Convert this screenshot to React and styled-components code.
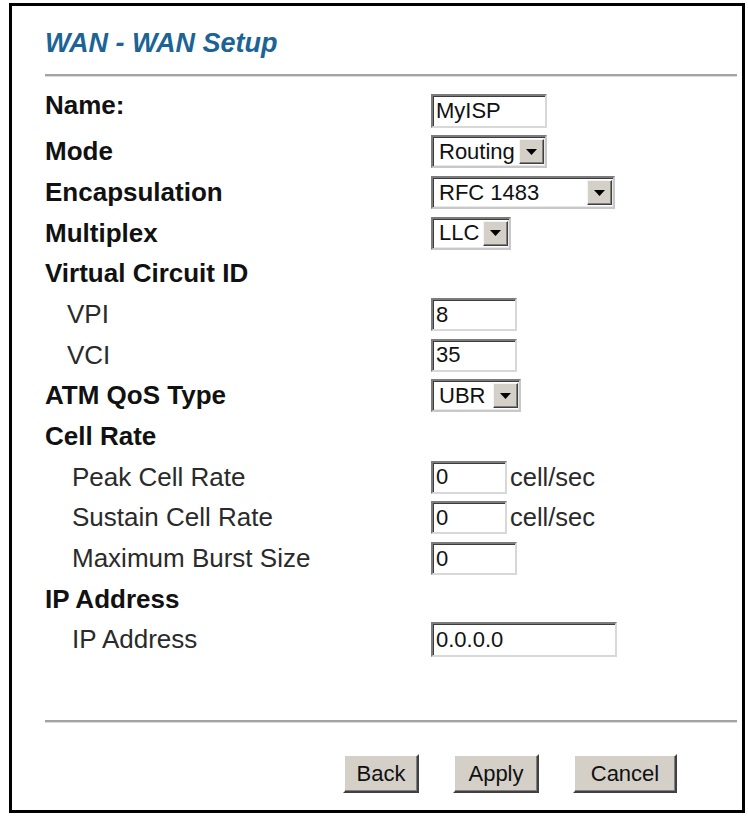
import { Fragment } from "react";
import styled, { createGlobalStyle } from "styled-components";

const GlobalStyle = createGlobalStyle`
  html, body {
    margin: 0;
    padding: 0;
    background: #ffffff;
  }
  body {
    font-family: "Liberation Sans", Arial, sans-serif;
    color: #111;
  }
`;

const Panel = styled.div`
  box-sizing: border-box;
  width: 736px;
  margin: 3px 0 0 9px;
  border: 3px solid #000;
  padding: 22px 5px 17px 33px;
  display: flex;
  flex-direction: column;
`;

const Title = styled.h1`
  margin: 0;
  font-size: 27px;
  line-height: 30px;
  font-weight: bold;
  font-style: italic;
  color: #1b6495;
`;

const Rule = styled.div`
  height: 2px;
  background: #a3a3a3;
  border-bottom: 1px solid #dcdcdc;
  margin-top: ${(p) => p.$top}px;
`;

const Form = styled.div`
  display: grid;
  grid-template-columns: 386px 1fr;
  grid-auto-rows: 40.67px;
  margin-top: 14px;
`;

const Label = styled.div`
  display: flex;
  align-items: center;
  padding-left: ${(p) => p.$indent || 0}px;
  padding-bottom: ${(p) => p.$lift || 0}px;
  font-size: 26px;
  font-weight: ${(p) => (p.$bold ? "bold" : "normal")};
  color: ${(p) => (p.$bold ? "#111" : "#2a2a2a")};
  white-space: nowrap;
`;

const Cell = styled.div`
  display: flex;
  align-items: center;
  gap: 3px;
`;

const TextBox = styled.input`
  box-sizing: border-box;
  width: ${(p) => p.$w}px;
  height: ${(p) => p.$h || 33}px;
  margin: 0;
  padding: 0 0 0 3px;
  border: 2px solid;
  border-color: #7c7c7c #d8d8d8 #d8d8d8 #7c7c7c;
  box-shadow: inset 1px 1px 0 #3c3c3c;
  background: #fff;
  font-family: "Liberation Sans", Arial, sans-serif;
  font-size: 22px;
  color: #111;
  outline: none;
`;

const SelectBox = styled.div`
  box-sizing: border-box;
  width: ${(p) => p.$w}px;
  height: 33px;
  display: flex;
  align-items: center;
  border: 2px solid;
  border-color: #7c7c7c #c8c8c8 #c8c8c8 #7c7c7c;
  box-shadow: inset 1px 1px 0 #3c3c3c, inset -1px -1px 0 #e8e8e8;
  background: #fff;
  padding: 2px 1px 2px 6px;
`;

const SelectValue = styled.span`
  flex: 1;
  font-size: 22px;
  color: #111;
`;

const ArrowButton = styled.span`
  box-sizing: border-box;
  width: 25px;
  height: 100%;
  display: flex;
  align-items: center;
  justify-content: center;
  background: #d4d0c8;
  border: 1px solid;
  border-color: #f4f4f4 #404040 #404040 #f4f4f4;
  box-shadow: inset -1px -1px 0 #808080;
`;

const Unit = styled.span`
  font-size: 25.5px;
  color: #2a2a2a;
`;

const Buttons = styled.div`
  display: flex;
  gap: 34px;
  padding-left: 298px;
  margin-top: 31px;
`;

const Button = styled.button`
  box-sizing: border-box;
  width: ${(p) => p.$w}px;
  height: 39px;
  padding: 0;
  background: #d4d0c8;
  border: 2px solid;
  border-color: #ffffff #404040 #404040 #ffffff;
  box-shadow: inset -1px -1px 0 #808080;
  font-family: "Liberation Sans", Arial, sans-serif;
  font-size: 22px;
  color: #111;
`;

const Select = ({ value, width }) => (
  <SelectBox $w={width}>
    <SelectValue>{value}</SelectValue>
    <ArrowButton>
      <svg width="11" height="6" viewBox="0 0 11 6">
        <polygon points="0,0 11,0 5.5,6" fill="#000" />
      </svg>
    </ArrowButton>
  </SelectBox>
);

const rows = [
  { label: "Name:", bold: true, lift: 12, control: <TextBox $w={116} $h={34} defaultValue="MyISP" /> },
  { label: "Mode", bold: true, control: <Select value="Routing" width={116} /> },
  { label: "Encapsulation", bold: true, control: <Select value="RFC 1483" width={184} /> },
  { label: "Multiplex", bold: true, control: <Select value="LLC" width={80} /> },
  { label: "Virtual Circuit ID", bold: true },
  { label: "VPI", indent: 22, control: <TextBox $w={86} defaultValue="8" /> },
  { label: "VCI", indent: 22, control: <TextBox $w={86} defaultValue="35" /> },
  { label: "ATM QoS Type", bold: true, control: <Select value="UBR" width={90} /> },
  { label: "Cell Rate", bold: true },
  { label: "Peak Cell Rate", indent: 27, control: <TextBox $w={76} defaultValue="0" />, unit: "cell/sec" },
  { label: "Sustain Cell Rate", indent: 27, control: <TextBox $w={76} defaultValue="0" />, unit: "cell/sec" },
  { label: "Maximum Burst Size", indent: 27, control: <TextBox $w={86} defaultValue="0" /> },
  { label: "IP Address", bold: true },
  { label: "IP Address", indent: 27, control: <TextBox $w={186} $h={35} defaultValue="0.0.0.0" /> },
];

export default function App() {
  return (
    <>
      <GlobalStyle />
      <Panel>
        <Title>WAN - WAN Setup</Title>
        <Rule $top={16} />
        <Form>
          {rows.map((r, i) => (
            <Fragment key={i}>
              <Label $bold={r.bold} $indent={r.indent} $lift={r.lift}>
                {r.label}
              </Label>
              <Cell>
                {r.control}
                {r.unit && <Unit>{r.unit}</Unit>}
              </Cell>
            </Fragment>
          ))}
        </Form>
        <Rule $top={60} />
        <Buttons>
          <Button $w={76}>Back</Button>
          <Button $w={86}>Apply</Button>
          <Button $w={104}>Cancel</Button>
        </Buttons>
      </Panel>
    </>
  );
}
